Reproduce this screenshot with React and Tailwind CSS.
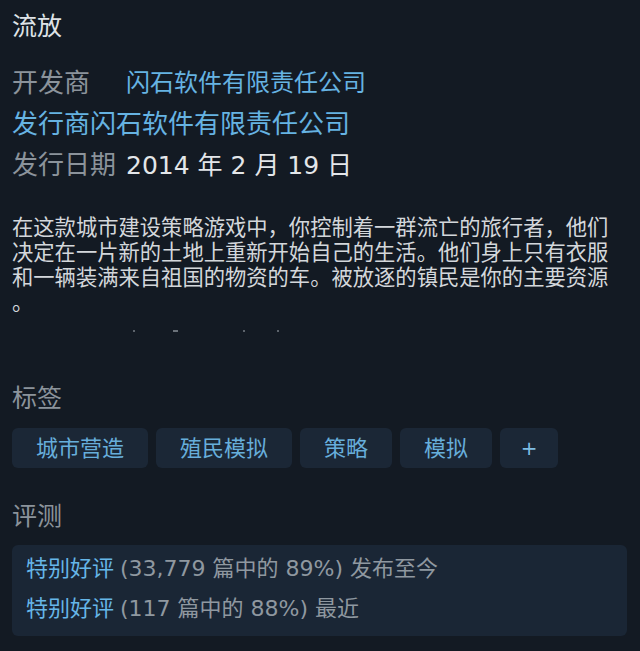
import React from 'react';

const tags = ['城市营造', '殖民模拟', '策略', '模拟'];

const reviews = [
  { label: '特别好评', detail: '(33,779 篇中的 89%) 发布至今' },
  { label: '特别好评', detail: '(117 篇中的 88%) 最近' },
];

const App = () => (
  <div className="min-h-screen bg-[#131a23] pl-[12px] pr-[13px] pt-[12px] pb-[15px] font-['DejaVu_Sans','Noto_Sans_CJK_SC',sans-serif]">
    <h1 className="text-[25px] leading-[30px] text-[#dfe3e7]">流放</h1>

    <div className="mt-[21px] text-[26px] leading-[41px]">
      <div className="flex">
        <span className="w-[114px] text-[#8b939b]">开发商</span>
        <span className="text-[24px] text-[#66b3e2]">闪石软件有限责任公司</span>
      </div>
      <div className="text-[#66b3e2]">发行商闪石软件有限责任公司</div>
      <div className="flex">
        <span className="text-[#8b939b]">发行日期</span>
        <span className="ml-[10px] text-[25px] text-[#e3e6e9]">2014 年 2 月 19 日</span>
      </div>
    </div>

    <p className="mt-[29px] text-[21.3px] leading-[25px] text-[#d3d7db]">
      在这款城市建设策略游戏中，你控制着一群流亡的旅行者，他们
      <br />
      决定在一片新的土地上重新开始自己的生活。他们身上只有衣服
      <br />
      和一辆装满来自祖国的物资的车。被放逐的镇民是你的主要资源
      <br />
      。
    </p>

    <div className="mt-[15px] flex h-[2px] items-center">
      <span className="ml-[121px] h-[2px] w-[2px] bg-[#5c636b]" />
      <span className="ml-[38px] h-[2px] w-[5px] bg-[#6a7179]" />
      <span className="ml-[65px] h-[2px] w-[2px] bg-[#5c636b]" />
      <span className="ml-[32px] h-[2px] w-[2px] bg-[#5c636b]" />
    </div>

    <h2 className="mt-[52px] text-[25px] leading-[30px] text-[#8b939b]">标签</h2>
    <div className="mt-[14px] flex gap-[8px]">
      {tags.map((t) => (
        <span
          key={t}
          className="flex h-[40px] items-center rounded-[6px] bg-[#1b2736] px-[24px] text-[22px] text-[#67aedb]"
        >
          {t}
        </span>
      ))}
      <span className="flex h-[40px] w-[58px] items-center justify-center rounded-[6px] bg-[#1b2736] text-[20px] text-[#7fbde4]">
        +
      </span>
    </div>

    <h2 className="mt-[34px] text-[25px] leading-[30px] text-[#8b939b]">评测</h2>
    <div className="mt-[13px] rounded-[6px] bg-[#1a2635] px-[14px] pt-[4px] pb-[7px] text-[22px] leading-[40px]">
      {reviews.map((r, i) => (
        <div key={i} className="flex gap-[6px]">
          <span className="text-[#66b6e8]">{r.label}</span>
          <span className="text-[#8f98a0]">{r.detail}</span>
        </div>
      ))}
    </div>
  </div>
);

export default App;
